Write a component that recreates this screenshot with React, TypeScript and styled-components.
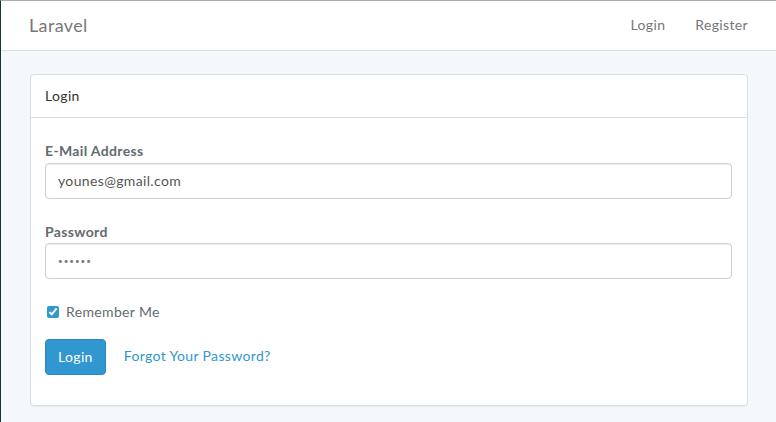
import React from 'react';
import styled, { createGlobalStyle } from 'styled-components';

const GlobalStyle = createGlobalStyle`
  html, body {
    margin: 0;
    padding: 0;
    background: #f5f8fa;
  }
  body {
    font-family: Lato, "Open Sans", sans-serif;
    font-size: 14px;
    line-height: 1.6;
    letter-spacing: 0.35px;
    color: #636b6f;
  }
  * {
    box-sizing: border-box;
  }
`

const Page = styled.div`
  min-height: 422px;
  border-top: 1px solid #a9acae;
  border-left: 1px solid #1c3236;
`

const Navbar = styled.nav`
  display: flex;
  align-items: center;
  justify-content: space-between;
  height: 50px;
  padding: 0 13px 0 28px;
  background: #fff;
  border-bottom: 1px solid #d3e0e9;
`

const Brand = styled.a`
  font-size: 18px;
  color: #777;
  text-decoration: none;
`

const NavLinks = styled.div`
  display: flex;
`

const NavLink = styled.a`
  padding: 0 15px;
  font-size: 14px;
  color: #777;
  text-decoration: none;
`

const Container = styled.main`
  padding: 23px 28px 0 29px;
`

const Panel = styled.section`
  background: #fff;
  border: 1px solid #d3e0e9;
  border-radius: 4px;
  box-shadow: 0 1px 1px rgba(0, 0, 0, 0.05);
`

const PanelHeading = styled.div`
  padding: 10px 14px;
  border-bottom: 1px solid #d3e0e9;
  font-size: 14px;
  color: #333;
`

const PanelBody = styled.form`
  display: flex;
  flex-direction: column;
  padding: 22px 15px 30px 14px;
`

const FormGroup = styled.div<{ $gap?: number }>`
  display: flex;
  flex-direction: column;
  margin-bottom: ${p => p.$gap ?? 22}px;
`

const Label = styled.label`
  font-weight: 700;
  color: #636b6f;
`

const Input = styled.input`
  height: 36px;
  width: 100%;
  padding: 6px 12px;
  font-family: inherit;
  font-size: 14px;
  letter-spacing: 0.35px;
  color: #555;
  background: #fff;
  border: 1px solid #ccd0d2;
  border-radius: 4px;
  box-shadow: inset 0 1px 1px rgba(0, 0, 0, 0.075);
  outline: none;

  &[type='password'] {
    font-size: 8px;
    letter-spacing: 1px;
    color: #777;
  }
`

const CheckLabel = styled.label`
  display: flex;
  align-items: center;
  gap: 7px;
  padding-left: 2px;
  color: #636b6f;
`

const Check = styled.input`
  width: 12px;
  height: 12px;
  margin: 0;
  accent-color: #3097d1;
`

const Actions = styled.div`
  display: flex;
  align-items: center;
  gap: 18px;
`

const Button = styled.button`
  height: 36px;
  padding: 0 12px;
  font-family: inherit;
  font-size: 14px;
  letter-spacing: 0.35px;
  color: #fff;
  background: #3097d1;
  border: 1px solid #2a88bd;
  border-radius: 4px;
`

const Link = styled.a`
  color: #3097d1;
  text-decoration: none;
`

export default function App() {
    return (
        <>
            <GlobalStyle />
            <Page>
                <Navbar>
                    <Brand href="#">Laravel</Brand>
                    <NavLinks>
                        <NavLink href="#">Login</NavLink>
                        <NavLink href="#">Register</NavLink>
                    </NavLinks>
                </Navbar>
                <Container>
                    <Panel>
                        <PanelHeading>Login</PanelHeading>
                        <PanelBody onSubmit={e => e.preventDefault()}>
                            <FormGroup>
                                <Label htmlFor="email">E-Mail Address</Label>
                                <Input id="email" type="email" defaultValue="younes@gmail.com" />
                            </FormGroup>
                            <FormGroup>
                                <Label htmlFor="password">Password</Label>
                                <Input id="password" type="password" defaultValue="secret" />
                            </FormGroup>
                            <FormGroup $gap={15}>
                                <CheckLabel>
                                    <Check type="checkbox" defaultChecked />
                                    Remember Me
                                </CheckLabel>
                            </FormGroup>
                            <Actions>
                                <Button type="submit">Login</Button>
                                <Link href="#">Forgot Your Password?</Link>
                            </Actions>
                        </PanelBody>
                    </Panel>
                </Container>
            </Page>
        </>
    )
}
